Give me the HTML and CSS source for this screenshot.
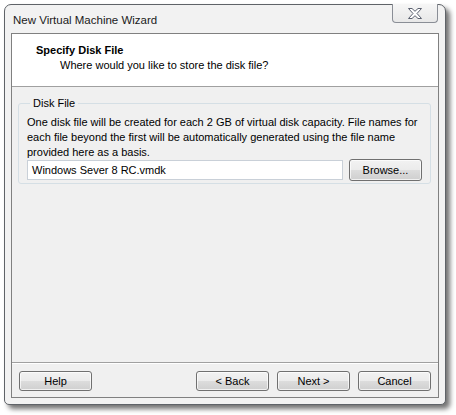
FILE: index.html
```html
<!DOCTYPE html>
<html>
<head>
<meta charset="utf-8">
<link rel="stylesheet" href="styles.css">
</head>
<body>
<div class="window">
  <div class="titlebar">
    <span class="title">New Virtual Machine Wizard</span>
    <div class="close">
      <svg width="18" height="13" viewBox="0 0 18 13">
        <path d="M2.5 1.5 H6 L9 4.3 L12 1.5 H15.5 L11 6.5 L15.5 11.5 H12 L9 8.7 L6 11.5 H2.5 L7 6.5 Z" fill="#ffffff" stroke="#5b6170" stroke-width="1" stroke-linejoin="round"/>
      </svg>
    </div>
  </div>
  <div class="client">
    <div class="header">
      <div class="h-title">Specify Disk File</div>
      <div class="h-sub">Where would you like to store the disk file?</div>
    </div>
    <div class="content">
      <fieldset class="group">
        <legend>Disk File</legend>
        <p class="desc">One disk file will be created for each 2 GB of virtual disk capacity. File names for each file beyond the first will be automatically generated using the file name provided here as a basis.</p>
        <div class="file-row">
          <div class="input">Windows Sever 8 RC.vmdk</div>
          <div class="btn browse">Browse...</div>
        </div>
      </fieldset>
    </div>
    <div class="footer">
      <div class="btn">Help</div>
      <div class="spacer"></div>
      <div class="btn">&lt; Back</div>
      <div class="btn">Next &gt;</div>
      <div class="btn">Cancel</div>
    </div>
  </div>
</div>
</body>
</html>
```
FILE: styles.css
```css
* { box-sizing: border-box; }
html, body { margin: 0; padding: 0; background: #ffffff; }
body {
  width: 456px;
  height: 415px;
  padding: 4px 0 0 4px;
  font-family: "Liberation Sans", Arial, sans-serif;
  font-size: 11px;
  color: #000;
}
.window {
  width: 442px;
  height: 401px;
  border: 1px solid #5f6368;
  border-radius: 7px 7px 5px 5px;
  background: #f2f2f2;
  box-shadow: 4px 4px 5px rgba(0,0,0,0.55);
  display: flex;
  flex-direction: column;
  padding: 0 6px 6px 6px;
}
.titlebar {
  height: 28px;
  flex: none;
  display: flex;
  align-items: flex-start;
  justify-content: space-between;
}
.title {
  margin-top: 8px;
  margin-left: 2px;
  line-height: 14px;
  font-size: 11.5px;
  color: #1a1a1a;
}
.close {
  width: 46px;
  height: 19px;
  margin-right: 1px;
  margin-top: -1px;
  border: 1px solid #8a8e96;
  border-top: none;
  border-radius: 0 0 4px 4px;
  background: linear-gradient(#f6f6f6, #e8e8e8);
  display: flex;
  align-items: center;
  justify-content: center;
}
.client {
  flex: 1;
  border: 1px solid #808080;
  background: #f0f0f0;
  display: flex;
  flex-direction: column;
}
.header {
  height: 53px;
  background: #ffffff;
  border-bottom: 1px solid #a0a0a0;
  padding: 9px 0 0 24px;
  flex: none;
}
.h-title { font-weight: bold; line-height: 15px; }
.h-sub { line-height: 15px; padding-left: 24px; }
.content {
  flex: 1;
  padding: 9px 8px 0 6px;
}
.group {
  margin: 0;
  border: 1px solid #d5dfe5;
  border-radius: 3px;
  padding: 4px 8px 2px 8px;
}
.group legend {
  padding: 0 3px;
  margin-left: 3px;
  line-height: 15px;
}
.desc {
  margin: 0;
  line-height: 15px;
  width: 392px;
}
.file-row {
  display: flex;
  align-items: center;
  margin-top: -1px;
}
.input {
  width: 316px;
  height: 20px;
  background: #fff;
  border: 1px solid #c9d0d8;
  padding: 0 4px;
  line-height: 18px;
}
.btn {
  width: 73px;
  height: 20px;
  border: 1px solid #707070;
  border-radius: 3px;
  background: linear-gradient(#f2f2f2 0%, #ebebeb 50%, #dddddd 50%, #cfcfcf 100%);
  box-shadow: inset 0 0 0 1px rgba(255,255,255,0.7);
  text-align: center;
  line-height: 18px;
}
.browse {
  margin-left: 6px;
  height: 22px;
  line-height: 20px;
}
.footer {
  height: 35px;
  flex: none;
  border-top: 1px solid #a0a0a0;
  box-shadow: inset 0 1px 0 #ffffff;
  display: flex;
  padding: 8px 7px 0 7px;
  gap: 8px;
}
.spacer { flex: 1; }
```
